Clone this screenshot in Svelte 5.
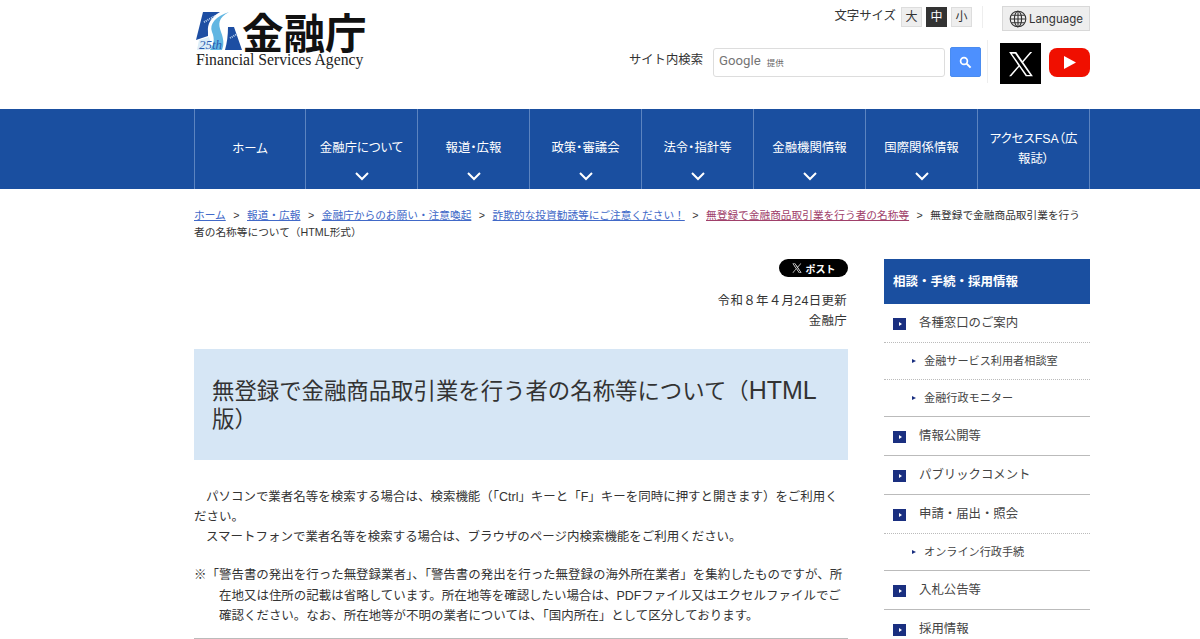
<script>
	const nav = [
		{ label: 'ホーム', arrow: false },
		{ label: '金融庁について', arrow: true },
		{ label: '報道・広報', arrow: true },
		{ label: '政策・審議会', arrow: true },
		{ label: '法令・指針等', arrow: true },
		{ label: '金融機関情報', arrow: true },
		{ label: '国際関係情報', arrow: true },
		{ label: 'アクセスFSA（広報誌）', arrow: false }
	];

	const crumbs = [
		{ label: 'ホーム', cls: 'link' },
		{ label: '報道・広報', cls: 'link' },
		{ label: '金融庁からのお願い・注意喚起', cls: 'link' },
		{ label: '詐欺的な投資勧誘等にご注意ください！', cls: 'link' },
		{ label: '無登録で金融商品取引業を行う者の名称等', cls: 'visited' }
	];

	const side = [
		{ label: '各種窓口のご案内', subs: ['金融サービス利用者相談室', '金融行政モニター'] },
		{ label: '情報公開等', subs: [] },
		{ label: 'パブリックコメント', subs: [] },
		{ label: '申請・届出・照会', subs: ['オンライン行政手続'] },
		{ label: '入札公告等', subs: [] },
		{ label: '採用情報', subs: [] }
	];
</script>

<div class="page">
	<header class="header">
		<div class="logo">
			<div class="logo-top">
				<svg class="mark" width="46" height="40" viewBox="0 0 46 40">
					<path d="M7,0 L24,0 C15,5 11,12 12,20 L12,24 L0,28 Z" fill="#1d4ea3" />
					<path d="M32,15 L38,15 L46,38 L29,38 C31,31 32,23 32,15 Z" fill="#1d4ea3" />
					<path d="M1,38 L3,28 L13,25 C15,30 15,34 13,38 Z" fill="#dcedf8" />
					<path d="M33,0 C22,6 22,12 25,20 C28,28 28,33 26,38 L14,38 C18,33 19,27 16,20 C13,12 20,4 33,0 Z" fill="#62b6e2" />
					<path d="M8,10 L19,4 M34,26 L41,22" stroke="#b9d2ee" stroke-width="2" stroke-dasharray="1 1" />
					<text x="3" y="37" class="mark-text">25th</text>
				</svg>
				<span class="logo-kanji">金融庁</span>
			</div>
			<div class="logo-en">Financial Services Agency</div>
		</div>
		<div class="tools">
			<div class="tools-row first">
				<span class="size-label">文字サイズ</span>
				<span class="size-btn">大</span>
				<span class="size-btn on">中</span>
				<span class="size-btn">小</span>
				<span class="sep-a"></span>
				<span class="lang">
					<svg width="18" height="18" viewBox="0 0 18 18" fill="none" stroke="#333" stroke-width="1.1">
						<circle cx="9" cy="9" r="7.8" />
						<ellipse cx="9" cy="9" rx="3.6" ry="7.8" />
						<path d="M9 1.2V16.8M1.2 9H16.8M2.3 5.2H15.7M2.3 12.8H15.7" />
					</svg>
					Language
				</span>
			</div>
			<div class="tools-row second">
				<span class="search-label">サイト内検索</span>
				<div class="search-box"><span class="google">Google</span><span class="teikyo">提供</span></div>
				<button class="search-btn" aria-label="検索">
					<svg width="13" height="13" viewBox="0 0 13 13" fill="none" stroke="#fff">
						<circle cx="5" cy="5" r="3.4" stroke-width="1.7" />
						<path d="M7.6 7.6L11.6 11.6" stroke-width="2" />
					</svg>
				</button>
				<span class="sep-b"></span>
				<span class="x-icon">
					<svg width="26" height="26" viewBox="0 0 24 24">
						<path fill="#fff" d="M14.1 10.4 22.3 1h-1.9l-7.1 8.2L7.6 1H1l8.6 12.5L1 23.3h1.9l7.5-8.7 6 8.7H23L14.1 10.4Zm-2.7 3.1-.9-1.2L3.6 2.5h3l5.6 8 .9 1.2 7.3 10.4h-3l-6-8.6Z" />
					</svg>
				</span>
				<span class="yt-icon">
					<svg width="12" height="13" viewBox="0 0 12 13"><polygon points="0,0 12,6.5 0,13" fill="#fff" /></svg>
				</span>
			</div>
		</div>
	</header>

	<nav class="nav">
		<div class="nav-inner">
			{#each nav as item}
				<div class="nav-item" class:has-arrow={item.arrow}>
					<span class="nav-label">{item.label}</span>
					{#if item.arrow}
						<svg class="chev" width="14" height="9" viewBox="0 0 14 9" fill="none" stroke="#fff" stroke-width="2"><path d="M1 1l6 6 6-6" /></svg>
					{/if}
				</div>
			{/each}
		</div>
	</nav>

	<div class="crumbs">
		{#each crumbs as c}<span class={c.cls}>{c.label}</span><span class="sep">&gt;</span>{/each}無登録で金融商品取引業を行う者の名称等について（HTML形式）
	</div>

	<div class="columns">
		<main class="main">
			<div class="post-row">
				<span class="post">
					<svg width="10" height="10" viewBox="0 0 24 24"><path fill="#fff" d="M14.1 10.4 22.3 1h-1.9l-7.1 8.2L7.6 1H1l8.6 12.5L1 23.3h1.9l7.5-8.7 6 8.7H23L14.1 10.4Zm-2.7 3.1-.9-1.2L3.6 2.5h3l5.6 8 .9 1.2 7.3 10.4h-3l-6-8.6Z" /></svg>
					ポスト
				</span>
			</div>
			<p class="meta">令和８年４月24日更新<br />金融庁</p>
			<h1 class="title">無登録で金融商品取引業を行う者の名称等について（<span class="latin">HTML</span>版）</h1>
			<p class="body">
				<span class="indent"></span>パソコンで業者名等を検索する場合は、検索機能（「Ctrl」キーと「F」キーを同時に押すと開きます）をご利用ください。<br />
				<span class="indent"></span>スマートフォンで業者名等を検索する場合は、ブラウザのページ内検索機能をご利用ください。
			</p>
			<p class="note">※「警告書の発出を行った無登録業者」、「警告書の発出を行った無登録の海外所在業者」を集約したものですが、所在地又は住所の記載は省略しています。所在地等を確認したい場合は、PDFファイル又はエクセルファイルでご確認ください。なお、所在地等が不明の業者については、「国内所在」として区分しております。</p>
			<hr class="rule" />
		</main>

		<aside class="side">
			<div class="side-head">相談・手続・採用情報</div>
			{#each side as s}
				<div class="side-group">
					<div class="side-item"><span class="square"></span><span class="side-text">{s.label}</span></div>
					{#each s.subs as sub}
						<div class="side-sub"><span class="side-text">{sub}</span></div>
					{/each}
				</div>
			{/each}
		</aside>
	</div>
</div>

<style>
	:global(html), :global(body) {
		overflow: hidden;
	}

	.page {
		height: 639px;
		overflow: hidden;
		color: #333;
		font-family: "Liberation Sans", "Noto Sans CJK JP", sans-serif;
	}

	.header, .nav-inner, .crumbs, .columns {
		width: 896px;
		margin-left: 194px;
	}

	.header {
		height: 109px;
		display: flex;
		justify-content: space-between;
	}

	.logo {
		padding: 11px 0 0 2px;
	}

	.logo-top {
		display: flex;
		align-items: center;
		gap: 0;
		height: 41px;
	}

	.mark-text {
		font-family: "Liberation Serif", serif;
		font-style: italic;
		font-size: 13px;
		fill: #2a5cb0;
	}

	.logo-kanji {
		font-family: "Noto Sans CJK JP", sans-serif;
		font-size: 41.5px;
		line-height: 41px;
		font-weight: 700;
		color: #111;
	}

	.logo-en {
		font-family: "Liberation Serif", serif;
		font-size: 15.7px;
		line-height: 16px;
		color: #222;
		white-space: nowrap;
	}

	.tools {
		display: flex;
		flex-direction: column;
		align-items: flex-end;
	}

	.tools-row {
		display: flex;
		align-items: flex-start;
	}

	.first {
		height: 25px;
		margin-top: 6px;
		font-size: 12.4px;
	}

	.size-label {
		margin: 0 5px 0 0;
		line-height: 20px;
	}

	.size-btn {
		width: 19px;
		height: 18px;
		margin: 1px 4px 0 0;
		background: #eee;
		border: 1px solid #ddd;
		display: flex;
		align-items: center;
		justify-content: center;
		font-size: 12px;
		line-height: 1;
	}

	.size-btn.on {
		background: #333;
		color: #fff;
		border-color: #333;
	}

	.size-btn:nth-of-type(4) {
		margin-right: 0;
	}

	.sep-a {
		width: 1px;
		height: 22px;
		background: #eee;
		margin: 0 19px 0 10px;
	}

	.lang {
		width: 86px;
		height: 23px;
		background: #eee;
		border: 1px solid #d8d8d8;
		display: flex;
		align-items: center;
		justify-content: center;
		gap: 2px;
		font-size: 11.5px;
		font-family: "Inter", sans-serif;
	}

	.second {
		margin-top: 12px;
	}

	.search-label {
		font-size: 12.35px;
		line-height: 18px;
		margin: 8px 10px 0 0;
	}

	.search-box {
		width: 225px;
		height: 27px;
		margin-top: 5px;
		border: 1px solid #ddd;
		border-radius: 3px;
		display: flex;
		align-items: center;
		padding-left: 5px;
		background: #fff;
	}

	.google {
		font-family: "Roboto", sans-serif;
		font-size: 13.2px;
		color: #757575;
		margin-bottom: 4px;
	}

	.teikyo {
		font-size: 8.5px;
		margin: 0 0 2px 6px;
		color: #666;
	}

	.search-btn {
		width: 31px;
		height: 30px;
		margin: 4px 0 0 5px;
		padding: 0;
		background: #4d90fe;
		border: 1px solid #4a8cf0;
		border-radius: 2px;
		display: flex;
		align-items: center;
		justify-content: center;
	}

	.sep-b {
		width: 1px;
		height: 43px;
		margin: -3px 12px 0 6px;
		background: #eee;
	}

	.x-icon {
		width: 41px;
		height: 41px;
		background: #000;
		display: flex;
		align-items: center;
		justify-content: center;
	}

	.yt-icon {
		width: 41px;
		height: 29px;
		margin: 5px 0 0 8px;
		background: #f00f00;
		border-radius: 8px;
		display: flex;
		align-items: center;
		justify-content: center;
	}

	.nav {
		height: 80px;
		background: #1a4fa0;
	}

	.nav-inner {
		height: 80px;
		display: grid;
		grid-template-columns: 111px repeat(7, 112px);
		border-right: 1px solid #5c84c0;
		box-sizing: border-box;
	}

	.nav-item {
		border-left: 1px solid #5c84c0;
		display: flex;
		flex-direction: column;
		align-items: center;
		justify-content: center;
		color: #fff;
		font-size: 12.4px;
		font-feature-settings: "palt";
		line-height: 20px;
		text-align: center;
		padding: 0 8px;
		position: relative;
	}

	.nav-item.has-arrow {
		justify-content: flex-start;
		padding-top: 29px;
	}

	.chev {
		position: absolute;
		bottom: 8px;
		left: 50%;
		margin-left: -7px;
	}

	.crumbs {
		margin-top: 18px;
		font-size: 10.7px;
		line-height: 17px;
		height: 35px;
	}

	.link {
		color: #4169c8;
		text-decoration: underline;
	}

	.visited {
		color: #a0406a;
		text-decoration: underline;
	}

	.sep {
		margin: 0 7.5px;
	}

	.columns {
		margin-top: 17px;
		display: flex;
		justify-content: space-between;
		align-items: flex-start;
	}

	.main {
		width: 654px;
	}

	.post-row {
		display: flex;
		justify-content: flex-end;
	}

	.post {
		width: 69px;
		height: 18px;
		background: #000;
		color: #fff;
		border-radius: 9px;
		font-size: 10px;
		font-weight: 700;
		display: flex;
		align-items: center;
		justify-content: center;
		gap: 4px;
	}

	.meta {
		margin: 14px 1px 0 0;
		font-size: 12.48px;
		letter-spacing: 0.3px;
		line-height: 20px;
		text-align: right;
	}

	.title {
		margin: 18px 0 0;
		background: #d6e6f5;
		padding: 27px 18px 0;
		font-size: 22.4px;
		line-height: 28px;
		font-weight: 400;
		height: 111px;
		box-sizing: border-box;
	}

	.latin {
		font-size: 25px;
	}

	.body {
		margin: 27px 0 0;
		font-size: 12.48px;
		line-height: 20px;
	}

	.indent {
		display: inline-block;
		width: 12px;
	}

	.note {
		margin: 18px 0 0;
		font-size: 12.48px;
		line-height: 20.5px;
		padding-left: 25px;
		text-indent: -25px;
	}

	.rule {
		border: 0;
		border-top: 1px solid #bbb;
		margin: 11.5px 0 0;
	}

	.side {
		width: 206px;
	}

	.side-head {
		height: 45px;
		background: #1a4fa0;
		color: #fff;
		font-size: 12.5px;
		font-weight: 700;
		display: flex;
		align-items: center;
		padding: 0 0 2px 9px;
		box-sizing: border-box;
	}

	.side-group {
		border-bottom: 1px solid #bbb;
	}

	.side-item {
		height: 38px;
		display: flex;
		align-items: center;
		font-size: 12.4px;
		color: #444;
	}

	.side-text {
		margin-bottom: 3px;
	}

	.square {
		width: 13px;
		height: 12px;
		margin: 2px 13px 0 9px;
		background: #1a2f80;
		position: relative;
	}

	.square::after {
		content: '';
		position: absolute;
		left: 6px;
		top: 4px;
		border-left: 3px solid #fff;
		border-top: 2px solid transparent;
		border-bottom: 2px solid transparent;
	}

	.side-sub {
		height: 36px;
		border-top: 1px dotted #bbb;
		display: flex;
		align-items: center;
		font-size: 11.15px;
		color: #444;
		padding-left: 40px;
		position: relative;
	}

	.side-sub::before {
		content: '';
		position: absolute;
		left: 28px;
		top: 16px;
		border-left: 4px solid #1a2f80;
		border-top: 2.5px solid transparent;
		border-bottom: 2.5px solid transparent;
	}
</style>
